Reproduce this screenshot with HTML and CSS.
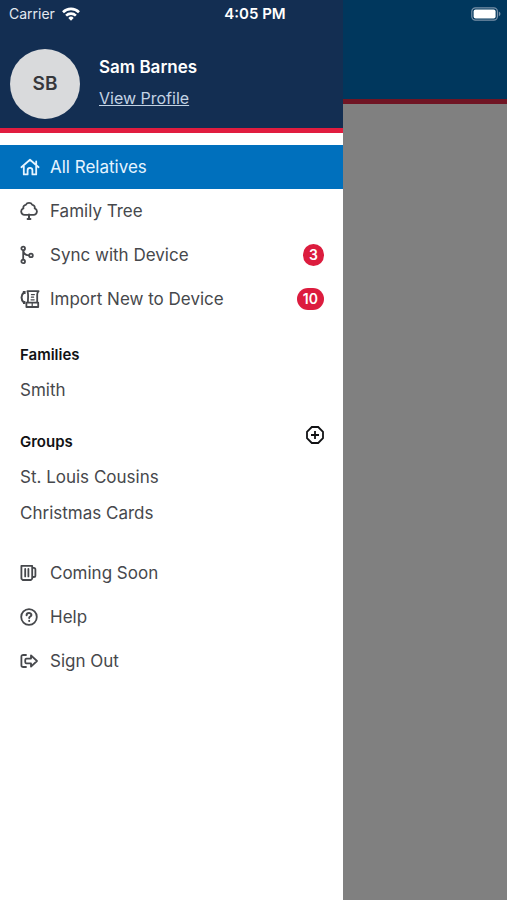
FILE: index.html
```html
<!DOCTYPE html>
<html lang="en">
<head>
<meta charset="utf-8">
<meta name="viewport" content="width=device-width, initial-scale=1">
<title>All Relatives</title>
<link rel="stylesheet" href="styles.css">
</head>
<body>
<div class="status">
  <div class="status-carrier">
    <span>Carrier</span>
    <svg width="18" height="14" viewBox="0 0 18 14" fill="none" stroke="currentColor" stroke-width="2.6" aria-hidden="true">
      <path d="M1 5.2a11.4 11.4 0 0 1 16 0"/>
      <path d="M4.1 8.6a7 7 0 0 1 9.8 0"/>
      <path d="M9 13.8l-2.7-2.9a3.9 3.9 0 0 1 5.4 0z" fill="currentColor" stroke="none"/>
    </svg>
  </div>
  <div class="status-time">4:05 PM</div>
  <svg class="status-battery" width="31" height="14" viewBox="0 0 31 14" aria-hidden="true">
    <rect x="1.8" y=".8" width="25.6" height="12.4" rx="3.6" fill="none" stroke="#7891a8" stroke-width="1.2"/>
    <rect x="3.6" y="2.4" width="22" height="9.2" rx="2" fill="#fff"/>
    <path d="M28.8 4.6c2.2.9 2.2 3.9 0 4.8z" fill="#7891a8"/>
  </svg>
</div>
<div class="app">
  <aside class="drawer">
    <header class="profile">
      <div class="avatar">SB</div>
      <div class="profile-text">
        <div class="profile-name">Sam Barnes</div>
        <a class="profile-link" href="#profile">View Profile</a>
      </div>
    </header>
    <nav class="menu">
      <a class="row row-active" href="#relatives">
        <svg class="icon" viewBox="0 0 20 20" aria-hidden="true"><path d="M1.4 10.2L10 2.8l8.6 7.4M3.8 9v8.4h3.8v-4.2a2.4 2.4 0 0 1 4.8 0v4.2h3.8V9M16.2 7.6V4.4"/></svg>
        <span>All Relatives</span>
      </a>
      <a class="row" href="#tree">
        <svg class="icon" viewBox="0 0 20 20" aria-hidden="true"><path d="M7.8 13.8H4.6a3.3 3.3 0 0 1-1.2-6.4 2.8 2.8 0 0 1 2.4-3.5 3.7 3.7 0 0 1 6.5 0 2.8 2.8 0 0 1 2.4 3.5 3.3 3.3 0 0 1-1.2 6.4h-3.2"/><path d="M9 13.4v4.4M7.6 18h2.8" stroke-width="2"/></svg>
        <span>Family Tree</span>
      </a>
      <a class="row" href="#sync">
        <svg class="icon" viewBox="0 0 20 20" aria-hidden="true"><circle cx="3.2" cy="3.4" r="1.8"/><circle cx="3.2" cy="16.4" r="1.8"/><circle cx="11" cy="10.4" r="1.8"/><path d="M3.2 5.4v9M3.4 6.2c.6 2.8 2.6 4.2 5.6 4.2"/></svg>
        <span>Sync with Device</span>
        <span class="badge">3</span>
      </a>
      <a class="row" href="#import">
        <svg class="icon" viewBox="0 0 20 20" aria-hidden="true"><path d="M7.4 2.2h11.2c-1.2.8-1.4 2-1.4 3.4v8M7.4 2.2c1.2 2 .8 5.4.4 11.4M6.4 13.6h11.8V18H6.4z"/><path d="M12.2 13.8v4M11.4 5.6h3M11.4 8.2h2.2M11 10.8h3.2" stroke-width="1.2"/><path d="M3.8 3.6C.8 6 .8 11 3.8 13.4" stroke-width="2"/><path d="M2.8 2h2.8v3H3zM3 12h2.4v3H3z" fill="currentColor" stroke="none"/></svg>
        <span>Import New to Device</span>
        <span class="badge">10</span>
      </a>
    </nav>
    <section class="group">
      <div class="group-head"><h2>Families</h2></div>
      <a class="item" href="#smith">Smith</a>
    </section>
    <section class="group">
      <div class="group-head">
        <h2>Groups</h2>
        <button class="add" type="button" aria-label="Add group">
          <svg width="18" height="18" viewBox="0 0 18 18" aria-hidden="true"><path d="M5.8 1h6.4L17 5.8v6.4L12.2 17H5.8L1 12.2V5.8zM9 5v8M5 9h8"/></svg>
        </button>
      </div>
      <a class="item" href="#cousins">St. Louis Cousins</a>
      <a class="item" href="#cards">Christmas Cards</a>
    </section>
    <nav class="more">
      <a class="row" href="#soon">
        <svg class="icon" viewBox="0 0 20 20" aria-hidden="true"><path d="M1.4 2.8h10.8v12.8L11 17H2.6l-1.2-1.4zM12.2 4.8h1.6c1 0 1.6.6 1.6 1.6v6c0 1-.6 1.6-1.6 1.6h-1.6M5.2 6v7.4M8.4 6v7.4"/></svg>
        <span>Coming Soon</span>
      </a>
      <a class="row" href="#help">
        <svg class="icon" viewBox="0 0 20 20" aria-hidden="true"><circle cx="9" cy="10" r="7.8"/><path d="M6.6 8.2c0-3 4.8-2.8 4.8-.2 0 1.6-2.2 1.4-2.2 3M9.2 13.8v.2" stroke-width="2"/></svg>
        <span>Help</span>
      </a>
      <a class="row" href="#signout">
        <svg class="icon" viewBox="0 0 20 20" aria-hidden="true"><path d="M6 4H3.4C2 4 1.4 4.6 1.4 5.8v8.4c0 1.2.6 1.8 2 1.8H6M11 4.4l6 5.6-6 5.6v-3.2H6.4c-1.6 0-1.6-4.8 0-4.8H11z"/></svg>
        <span>Sign Out</span>
      </a>
    </nav>
  </aside>
  <main class="page"><div class="page-bar"></div></main>
</div>
</body>
</html>
```
FILE: styles.css
```css
* {
  box-sizing: border-box;
}

body {
  margin: 0;
  font-family: Inter, "Liberation Sans", sans-serif;
  font-size: 17px;
  line-height: 20px;
  color: #46484c;
}

a {
  color: inherit;
  text-decoration: none;
}

.app {
  display: grid;
  grid-template-columns: 343fr 164fr;
  min-height: 100vh;
}

.status {
  position: absolute;
  top: 0;
  left: 0;
  right: 0;
  display: grid;
  grid-template-columns: 1fr auto 1fr;
  align-items: center;
  height: 27px;
  padding: 0 6px 0 9px;
  font-size: 14px;
  color: #fff;
}

.status-carrier {
  display: flex;
  align-items: center;
  gap: 7px;
  color: #e3e9f0;
}

.status-carrier svg {
  color: #fff;
}

.status-time {
  font-size: 15px;
  font-weight: 600;
}

.status-battery {
  justify-self: end;
}

.drawer {
  background: #fff;
}

.profile {
  display: flex;
  align-items: center;
  gap: 19px;
  padding: 49px 10px 9px;
  background: #132e52;
  border-bottom: 5px solid #e11d3f;
}

.avatar {
  display: grid;
  place-items: center;
  width: 70px;
  height: 70px;
  border-radius: 50%;
  background: #d9dadc;
  color: #36373b;
  font-size: 19px;
  font-weight: 600;
}

.profile-text {
  display: grid;
  gap: 11px;
  padding-bottom: 4px;
}

.profile-name {
  color: #fff;
  font-weight: 600;
}

.profile-link {
  color: #c3d3e4;
  font-size: 16px;
  text-decoration: underline;
}

.menu {
  padding-top: 12px;
}

.more {
  margin-top: 20px;
}

.row {
  display: flex;
  align-items: center;
  gap: 10px;
  height: 44px;
  padding: 0 19px 0 20px;
}

.row-active {
  background: #0070bd;
  color: #e6f4ff;
}

.icon {
  width: 20px;
  height: 20px;
  fill: none;
  stroke: currentColor;
  stroke-width: 1.8;
  stroke-linejoin: round;
  stroke-linecap: round;
}

.badge {
  margin-left: auto;
  min-width: 20px;
  padding: 1px 6px;
  border-radius: 11px;
  background: #dc1c3e;
  color: #fff;
  font-size: 14px;
  font-weight: 600;
  text-align: center;
}

.group {
  margin-top: 24px;
}

.group-head {
  display: flex;
  align-items: flex-end;
  justify-content: space-between;
  height: 20px;
  margin-bottom: 7px;
  padding: 0 19px 0 20px;
}

.group-head h2 {
  margin: 0;
  font-size: 15px;
  font-weight: 600;
  color: #111214;
}

.add {
  display: flex;
  margin-bottom: 8px;
  padding: 0;
  border: 0;
  background: none;
}

.add svg {
  fill: none;
  stroke: #111214;
  stroke-width: 1.8;
}

.item {
  display: flex;
  align-items: center;
  height: 36px;
  padding: 0 20px;
}

.page {
  background: #808080;
}

.page-bar {
  height: 104px;
  background: #00375d;
  border-bottom: 5px solid #701524;
}
```
